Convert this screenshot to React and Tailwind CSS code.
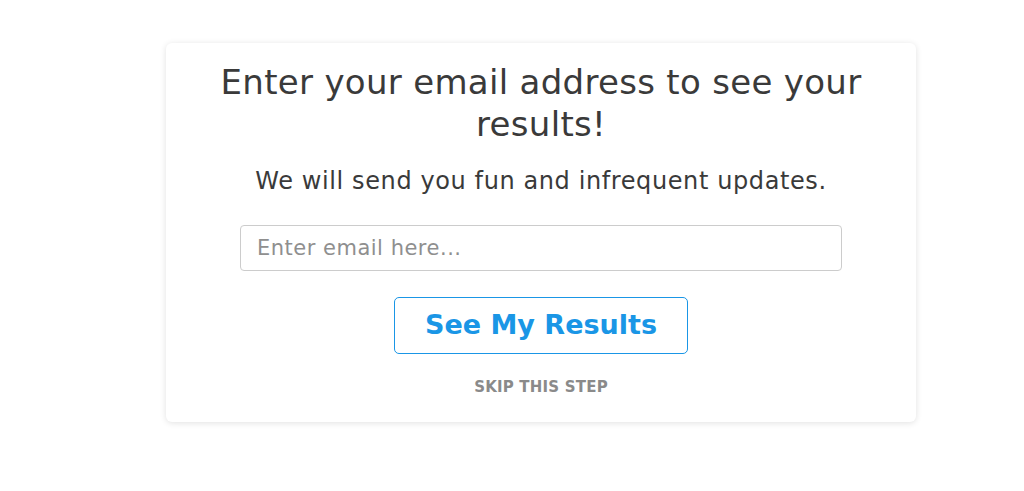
export default function App() {
  return (
    <div className="w-[1024px] h-[491px] bg-white" style={{ fontFamily: '"DejaVu Sans", sans-serif' }}>
      <div className="pt-[43px] pl-[166px]">
        <div className="w-[750px] h-[379px] bg-white rounded-[6px] shadow-[0_1px_6px_rgba(0,0,0,0.12)] flex flex-col items-center pt-[18px]">
          <h1 className="text-[34px] leading-[42px] text-[#3a3a3a] text-center w-[700px] font-normal tracking-[0.3px]">
            Enter your email address to see your results!
          </h1>
          <p className="mt-[21px] text-[24px] leading-[30px] text-[#3a3a3a] text-center tracking-[0.6px]">
            We will send you fun and infrequent updates.
          </p>
          <input
            type="text"
            placeholder="Enter email here..."
            className="mt-[29px] w-[602px] h-[46px] border border-[#cccccc] rounded-[4px] px-[16px] text-[21px] text-[#444] placeholder:text-[#8f8f8f] outline-none tracking-[0.5px]"
            style={{ fontFamily: '"DejaVu Sans", sans-serif' }}
          />
          <button
            className="mt-[26px] w-[294px] h-[57px] border border-[#1a96e6] rounded-[5px] text-[#1a96e6] text-[27px] font-semibold bg-white"
            style={{ fontFamily: '"DejaVu Sans", sans-serif' }}
          >
            See My Results
          </button>
          <div className="mt-[22px] text-[15px] font-bold text-[#8a8a8a] tracking-[0.2px]">SKIP THIS STEP</div>
        </div>
      </div>
    </div>
  );
}
